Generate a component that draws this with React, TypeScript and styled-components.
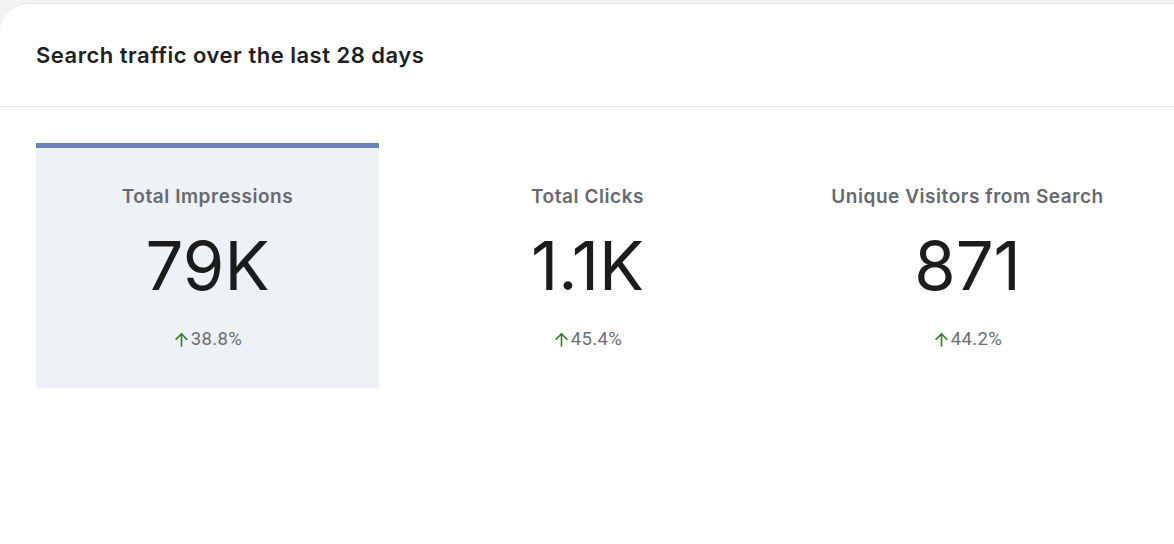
import React from "react"
import styled, { createGlobalStyle } from "styled-components"

const GlobalStyle = createGlobalStyle`
  html, body {
    margin: 0;
    padding: 0;
    background: #f1f3f4;
  }
  body {
    font-family: "Inter", "Liberation Sans", sans-serif;
  }
`

interface Metric {
  label: string
  value: string
  change: string
}

const metrics: Metric[] = [
  { label: "Total Impressions", value: "79K", change: "38.8%" },
  { label: "Total Clicks", value: "1.1K", change: "45.4%" },
  { label: "Unique Visitors from Search", value: "871", change: "44.2%" }
]

const ArrowUp = () => (
  <svg width="17" height="17" viewBox="0 0 24 24" fill="none">
    <path
      d="M12 21V4M4.5 11.5L12 4l7.5 7.5"
      stroke="#3a7d2c"
      strokeWidth="2.3"
      strokeLinecap="square"
    />
  </svg>
)

export default function App() {
  return (
    <>
      <GlobalStyle />
      <Page>
        <Card>
          <Header>
            <Title>Search traffic over the last 28 days</Title>
          </Header>
          <Tiles>
            {metrics.map((m, i) => (
              <Tile key={m.label} $active={i === 0}>
                <TileLabel>{m.label}</TileLabel>
                <TileValue>{m.value}</TileValue>
                <Change>
                  <ArrowUp />
                  <span>{m.change}</span>
                </Change>
              </Tile>
            ))}
          </Tiles>
        </Card>
      </Page>
    </>
  )
}

// Styled
const Page = styled.div`
  width: 1174px;
  height: 544px;
  padding-top: 3px;
  box-sizing: border-box;
  overflow: hidden;
`

const Card = styled.div`
  background: #fff;
  height: 100%;
  border-top-left-radius: 28px;
  border-top: 1px solid #e3e3e3;
  box-sizing: border-box;
`

const Header = styled.div`
  height: 102px;
  display: flex;
  align-items: center;
  padding: 0 36px;
  border-bottom: 1px solid #e6e6e6;
`

const Title = styled.h2`
  margin: 0;
  font-size: 22px;
  font-weight: 600;
  color: #1f1f1f;
  letter-spacing: 0.5px;
`

const Tiles = styled.div`
  display: grid;
  grid-template-columns: repeat(3, 343px);
  gap: 37px;
  padding: 36px 36px 0;
`

const Tile = styled.div<{ $active?: boolean }>`
  height: 245px;
  box-sizing: border-box;
  display: flex;
  flex-direction: column;
  align-items: center;
  border-top: 5px solid ${(p) => (p.$active ? "#6983b9" : "transparent")};
  background: ${(p) => (p.$active ? "#eef1f6" : "transparent")};
  padding-top: 36px;
`

const TileLabel = styled.div`
  font-size: 19px;
  font-weight: 600;
  color: #666a6e;
  line-height: 26px;
  letter-spacing: 0.55px;
`

const TileValue = styled.div`
  font-size: 67px;
  font-weight: 400;
  color: #1b1c1c;
  line-height: 80px;
  margin-top: 16px;
`

const Change = styled.div`
  display: flex;
  align-items: center;
  gap: 1px;
  margin-top: 22px;
  font-family: "Roboto", sans-serif;
  font-size: 18.5px;
  letter-spacing: 0.4px;
  color: #6b6f73;
  line-height: 22px;
`
